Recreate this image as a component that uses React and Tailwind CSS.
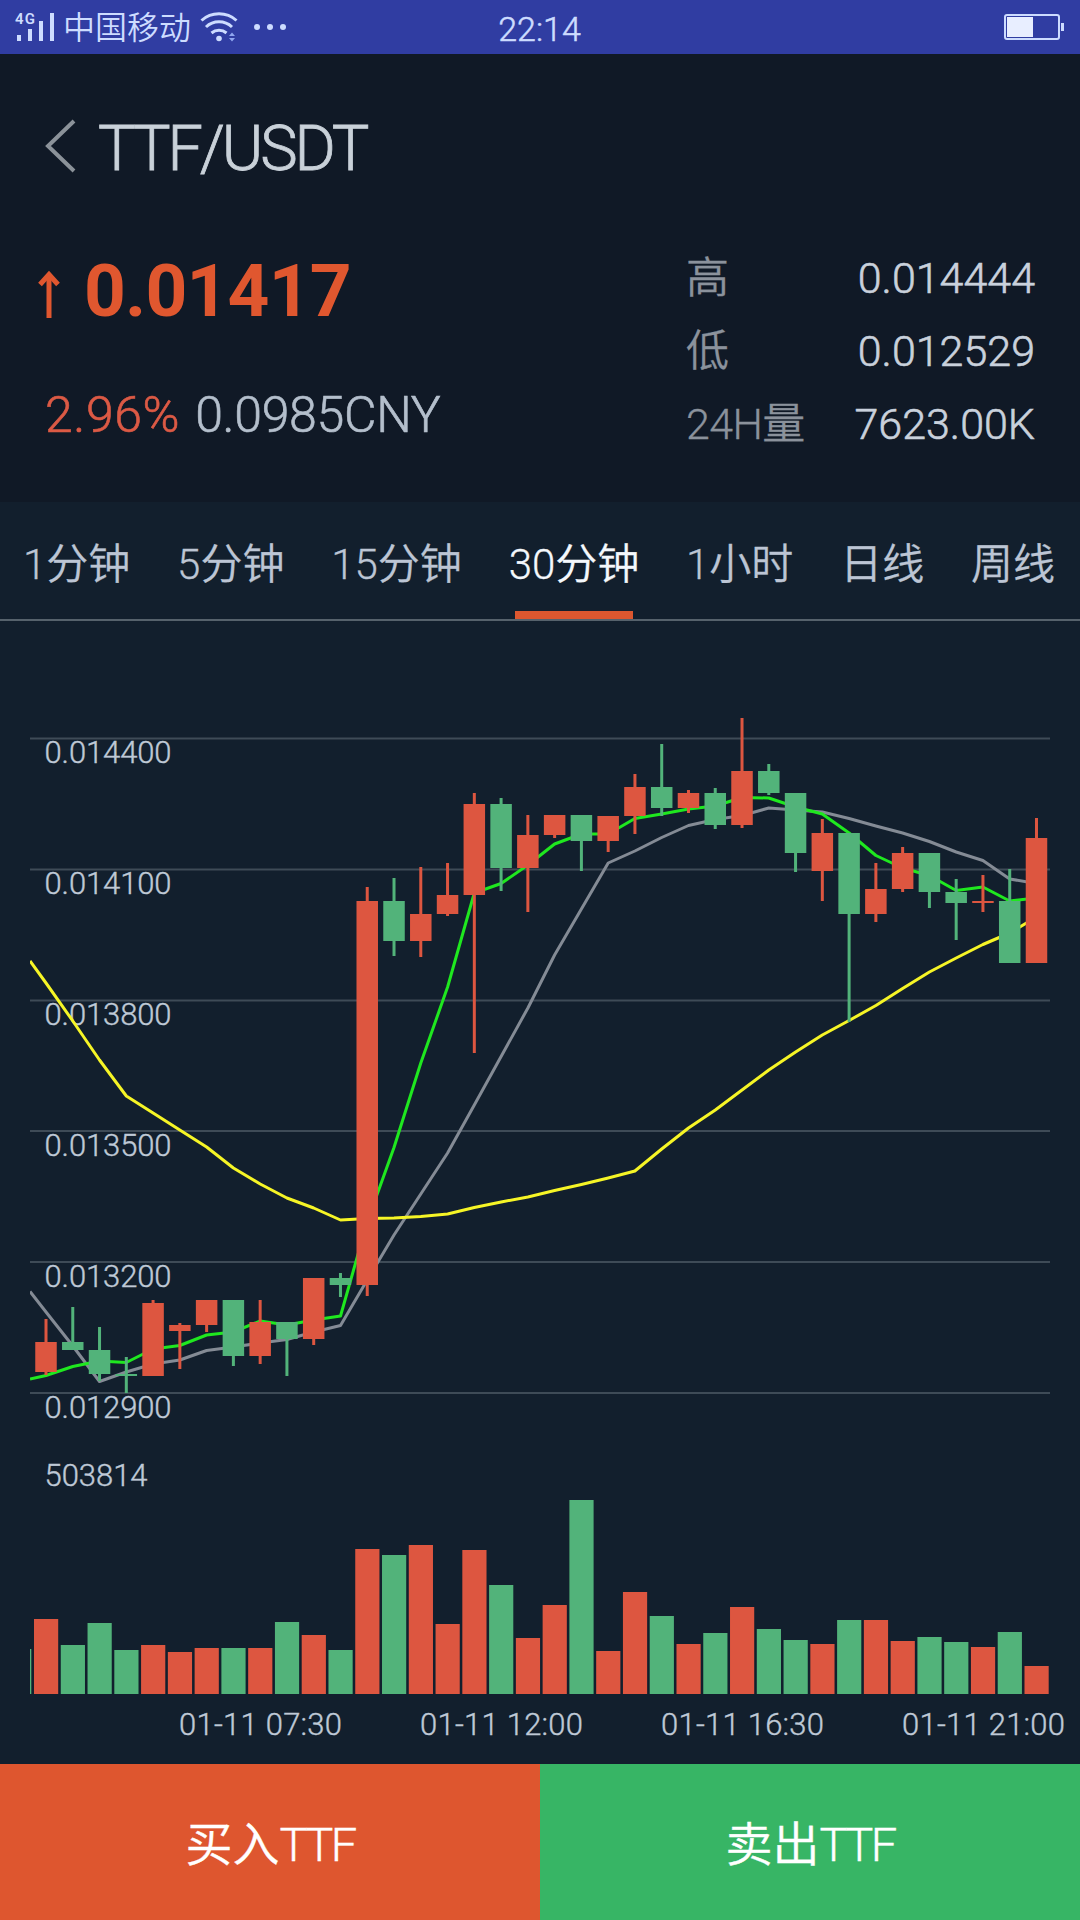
import clsx from 'clsx'

const RED = '#dd5640'
const GREEN = '#52b37a'

const STEP = 26.77
const FIRST_X = 46
const VOLUME_BASE = 1074

// [rising, high, bodyTop, bodyBottom, low, volumeTop]
const candles = [
  [1, 699, 722, 752, 755, 999],
  [0, 687, 722, 730, 730, 1025],
  [0, 707, 730, 754, 761, 1003],
  [0, 737, 754, 756, 773, 1030],
  [1, 680, 683, 756, 756, 1025],
  [1, 703, 705, 711, 749, 1032],
  [1, 680, 680, 705, 712, 1028],
  [0, 680, 680, 736, 746, 1028],
  [1, 680, 702, 736, 744, 1028],
  [0, 702, 702, 719, 756, 1002],
  [1, 658, 658, 719, 725, 1015],
  [0, 653, 658, 665, 677, 1030],
  [1, 267, 281, 665, 676, 929],
  [0, 258, 281, 321, 336, 935],
  [1, 247, 294, 321, 337, 925],
  [1, 243, 275, 294, 296, 1004],
  [1, 173, 184, 275, 433, 930],
  [0, 178, 184, 248, 271, 965],
  [1, 195, 215, 248, 292, 1018],
  [1, 195, 195, 215, 218, 985],
  [0, 195, 195, 221, 251, 880],
  [1, 196, 196, 221, 232, 1031],
  [1, 154, 167, 196, 214, 972],
  [0, 124, 167, 188, 196, 996],
  [1, 170, 173, 188, 193, 1024],
  [0, 168, 173, 205, 209, 1013],
  [1, 98, 151, 205, 208, 987],
  [0, 144, 151, 173, 175, 1009],
  [0, 173, 173, 233, 252, 1020],
  [1, 199, 213, 251, 281, 1024],
  [0, 213, 213, 294, 402, 1000],
  [1, 243, 269, 294, 302, 1000],
  [1, 227, 233, 269, 272, 1021],
  [0, 233, 233, 272, 288, 1017],
  [0, 259, 272, 283, 320, 1022],
  [1, 255, 281, 283, 292, 1027],
  [0, 249, 281, 343, 343, 1012],
  [1, 198, 218, 343, 343, 1046],
]

const ma5 = [
  755.5, 746.5, 741, 742.5, 729, 725.5, 715, 712, 701, 705, 700, 696, 602, 527.5, 443, 367, 273, 263.5, 245, 224,
  214, 214, 198.5, 194, 189, 186, 177.5, 178, 187, 194, 213, 235.5, 248, 255.5, 270.5, 267, 281, 278,
]
const ma10 = [
  692, 726, 761.5, 752, 744, 740, 730.5, 727, 723, 719.5, 712, 705.5, 660, 615, 574, 533, 485, 436.5, 388, 335,
  289, 243, 231, 217.5, 205.5, 199.5, 195.5, 188, 190, 192, 198.5, 206, 213, 221.5, 232, 240.5, 259, 263.5,
]
const ma30 = [
  363, 401, 440, 476, 493, 510, 527, 548, 564, 578, 588, 600, 598.5, 598, 596.5, 594, 587.5, 582, 577, 570.5,
  564.5, 558, 551, 529, 508, 490, 470, 450, 432, 415, 400.5, 385.5, 368.5, 352, 338, 324.5, 313, 297,
]

const gridLines = [
  { y: 118.5, label: '0.014400' },
  { y: 249.5, label: '0.014100' },
  { y: 380.5, label: '0.013800' },
  { y: 511, label: '0.013500' },
  { y: 642, label: '0.013200' },
  { y: 773, label: '0.012900' },
]

const timeLabels = [
  { x: 179, label: '01-11 07:30' },
  { x: 420, label: '01-11 12:00' },
  { x: 661, label: '01-11 16:30' },
  { x: 902, label: '01-11 21:00' },
]

const intervals = ['1分钟', '5分钟', '15分钟', '30分钟', '1小时', '日线', '周线']

const centerX = (index) => FIRST_X + index * STEP

const toPoints = (startY, values) =>
  [`30,${startY}`, ...values.map((y, index) => `${centerX(index).toFixed(1)},${y}`)].join(' ')

function StatusBar() {
  return (
    <div className="flex h-[54px] items-center justify-between bg-[#303da2] pl-[15px] pr-4 text-[#cddcff]">
      <div className="flex flex-1 items-center">
        <svg width="42" height="54" viewBox="0 0 42 54" fill="currentColor">
          <text x="0" y="24" fontSize="15" fontWeight="600" textLength="20">4G</text>
          <rect x="2" y="35" width="4" height="6" />
          <rect x="13" y="29" width="4" height="12" />
          <rect x="24" y="21" width="4" height="20" />
          <rect x="35" y="13" width="4" height="28" />
        </svg>
        <span className="ml-[6px] pt-[2px] text-[32px] leading-[52px]">中国移动</span>
        <svg className="ml-[9px]" width="40" height="54" viewBox="0 0 40 54" fill="none" stroke="currentColor" strokeWidth="3">
          <path d="M1.5 20.5a26 26 0 0 1 35 0" />
          <path d="M6 27a19 19 0 0 1 26 0" />
          <path d="M11.500 33a11.500 11.500 0 0 1 15 0" />
          <circle cx="19" cy="38.500" r="2.800" fill="currentColor" stroke="none" />
          <path d="M29 36l3-3.500 3 3.500zM29 38l3 3.500 3-3.500z" fill="#8fa6f0" stroke="none" />
        </svg>
        <svg className="ml-[14px]" width="32" height="54" viewBox="0 0 32 54" fill="currentColor">
          <circle cx="3" cy="27" r="3" />
          <circle cx="16" cy="27" r="3" />
          <circle cx="29" cy="27" r="3" />
        </svg>
      </div>
      <span className="pt-[4px] text-[34px] leading-[50px] [-webkit-text-stroke:0.5px]">22:14</span>
      <div className="flex flex-1 items-center justify-end">
        <div className="h-[26px] w-[56px] rounded-[3px] border-2 border-current p-px">
          <div className="h-full w-[26px] bg-[#e8eeff]" />
        </div>
        <div className="ml-px h-2 w-[3px] bg-current" />
      </div>
    </div>
  )
}

function Stat({ label, value }) {
  return (
    <div className="flex h-[73px] items-center justify-between text-[43px] leading-[73px]">
      <span className="tracking-[-0.6px] text-[#8b929c] [-webkit-text-stroke:0.3px]">{label}</span>
      <span className="text-[#c9d1dc] [-webkit-text-stroke:0.6px]">{value}</span>
    </div>
  )
}

function Header() {
  return (
    <header className="h-[448px] bg-[#101926]">
      <div className="flex h-[188px] items-center pl-[45px]">
        <svg className="-mt-1" width="31" height="54" viewBox="0 0 31 54" fill="none" stroke="#8b9299" strokeWidth="4">
          <path d="M29 2 3 27l26 25" />
        </svg>
        <h1 className="ml-[22px] pt-[2px] text-[63px] leading-[186px] tracking-[-3.1px] text-[#c9d1d9] [-webkit-text-stroke:0.8px]">
          TTF/USDT
        </h1>
      </div>
      <div className="flex justify-between pl-[38px] pr-[45px]">
        <div>
          <div className="flex h-[98px] items-center text-[#e0572f]">
            <svg className="mt-[5px]" width="22" height="48" viewBox="0 0 22 48" fill="none" stroke="currentColor">
              <path d="M11 48V4" strokeWidth="5" />
              <path d="M2 14.500 11 4.500l9 10" strokeWidth="5" />
            </svg>
            <span className="ml-[24px] text-[73px] font-bold leading-[98px] tracking-[-0.8px]">0.01417</span>
          </div>
          <div className="mt-[45px] flex pl-[7px] text-[50px] leading-[60px] [-webkit-text-stroke:0.6px]">
            <span className="tracking-[0.6px] text-[#dc5a45]">2.96%</span>
            <span className="ml-[15px] tracking-[-0.3px] text-[#b4bfcc]">0.0985CNY</span>
          </div>
        </div>
        <div className="w-[349px]">
          <Stat label="高" value="0.014444" />
          <Stat label="低" value="0.012529" />
          <Stat label="24H量" value="7623.00K" />
        </div>
      </div>
    </header>
  )
}

function IntervalTabs({ active }) {
  return (
    <nav className="flex h-[119px] justify-between border-b-2 border-[#56626c] pl-[23px] pr-[25px]">
      {intervals.map((item) => (
        <button
          key={item}
          className={clsx(
            'flex flex-col items-center text-[42px] [-webkit-text-stroke:0.3px]',
            item === active ? 'text-[#f4f8fc]' : 'text-[#bcc5d4]',
          )}
        >
          <span className="h-[109px] leading-[126px]">{item}</span>
          {item === active && <span className="ml-px h-[9px] w-[118px] bg-[#dc572f]" />}
        </button>
      ))}
    </nav>
  )
}

function Chart() {
  return (
    <svg className="-mt-px block" width="1080" height="1144" viewBox="0 0 1080 1144">
      <clipPath id="plot">
        <rect x="30" y="0" width="1020" height="1144" />
      </clipPath>

      {gridLines.map(({ y }) => (
        <line key={y} x1="30" x2="1050" y1={y} y2={y} stroke="#3e4b57" strokeWidth="2" />
      ))}
      <g fill="#bfc9d6" stroke="#bfc9d6" strokeWidth="0.400" fontSize="31">
        {gridLines.map(({ y, label }) => (
          <text key={label} x="44.500" y={y + 24.5} textLength="127">{label}</text>
        ))}
        <text x="44.500" y="866" textLength="103">503814</text>
        {timeLabels.map(({ x, label }) => (
          <text key={label} x={x} y="1115" textLength="163">{label}</text>
        ))}
      </g>

      <g clipPath="url(#plot)">
        <g fill="none" strokeWidth="3" strokeLinejoin="round">
          <polyline points={toPoints(671.5, ma10)} stroke="#848b95" />
          <polyline points={toPoints(341, ma30)} stroke="#f6f526" />
          <polyline points={toPoints(759, ma5)} stroke="#1fe81f" />
        </g>
        {candles.map(([rising, high, top, bottom, low, volumeTop], index) => {
          const x = centerX(index)
          return (
            <g key={index} fill={rising ? RED : GREEN}>
              <rect x={x - 1.5} y={high} width="3" height={low - high} />
              <rect x={x - 10.75} y={top} width="21.500" height={bottom - top} />
              <rect x={x - 12} y={volumeTop} width="24.200" height={VOLUME_BASE - volumeTop} />
            </g>
          )
        })}
        <rect x="30" y="1029" width="1.300" height="45" fill={GREEN} />
      </g>
    </svg>
  )
}

function App() {
  return (
    <div className="h-[1920px] w-[1080px] overflow-hidden bg-[#121f2d] font-['Roboto','Noto_Sans_CJK_SC',sans-serif] font-[350]">
      <StatusBar />
      <Header />
      <IntervalTabs active="30分钟" />
      <Chart />
      <div className="grid h-[156px] grid-cols-2 text-[47px] text-white [-webkit-text-stroke:0.4px]">
        <button className="bg-[#de562f] pt-[6px]">
          买入<span className="tracking-[-2.6px]">TTF</span>
        </button>
        <button className="bg-[#37b565] pt-[6px]">
          卖出<span className="tracking-[-2.6px]">TTF</span>
        </button>
      </div>
    </div>
  )
}

export default App
